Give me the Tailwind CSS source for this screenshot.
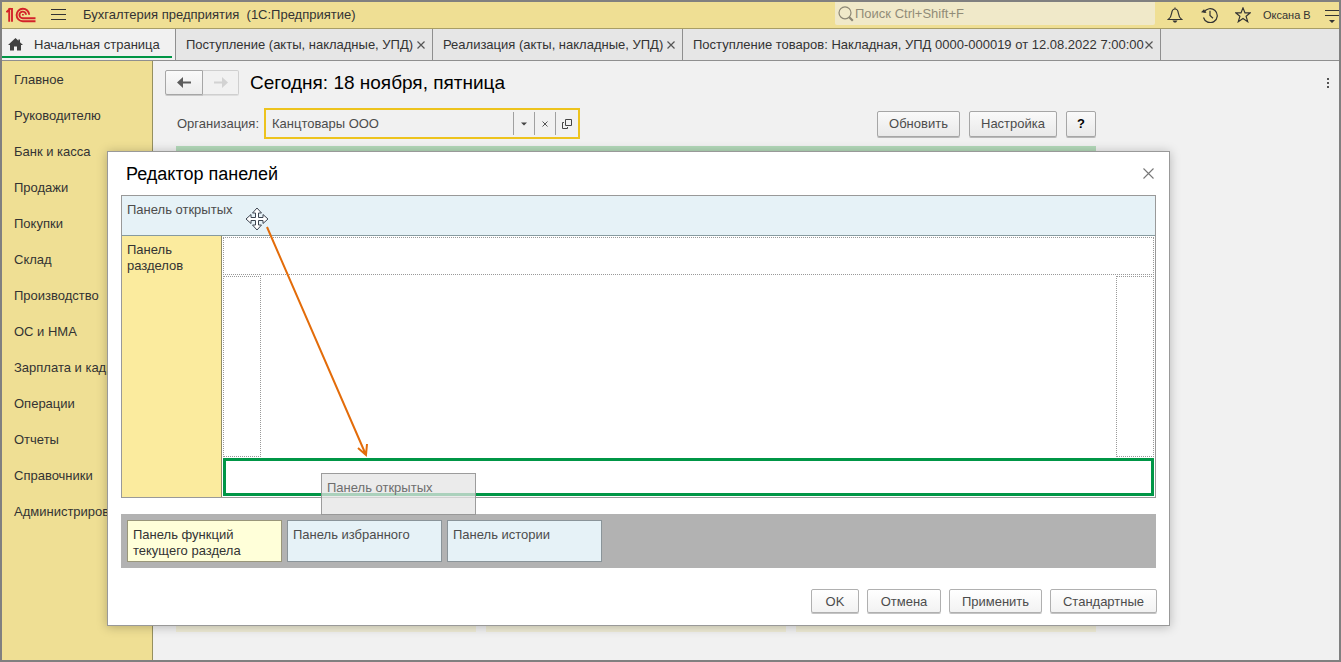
<!DOCTYPE html>
<html lang="ru">
<head>
<meta charset="utf-8">
<title>Бухгалтерия предприятия (1С:Предприятие)</title>
<script src="https://cdn.jsdelivr.net/npm/@tailwindcss/browser@4"></script>
</head>
<body class="font-['Liberation_Sans',Arial,sans-serif] text-[13px] leading-4 text-[#333]">
<div class="relative flex min-h-screen flex-col overflow-hidden border-2 border-[#808080] bg-[#f1f1f1]">

  <header class="flex h-[27px] items-center border-b border-[#a89e66] bg-[#efdf94] pb-px">
    <svg class="ml-1 h-[16px] w-[30px] shrink-0" viewBox="0 0 30 16" fill="none" stroke="#d3222a" stroke-width="1.9" aria-label="1С" role="img">
      <path d="M.4 5.200 3.200 2.600V14.800"/><path d="M2.400 1.900H6V14.800"/>
      <path d="M23.200 7.800A6.300 6.300 0 1 0 16.800 14.300H29.500"/>
      <path d="M20 7.800A3.300 3.300 0 1 0 16.800 11.200H29.500"/>
      <path d="M16 7.800h1.800" stroke-width="1.500"/>
    </svg>
    <button class="ml-[15px] flex h-6 w-4 flex-col justify-center gap-1" aria-label="Меню">
      <span class="h-px w-[15px] bg-[#333]"></span><span class="h-px w-[15px] bg-[#333]"></span><span class="h-px w-[15px] bg-[#333]"></span>
    </button>
    <h1 class="ml-4 whitespace-pre">Бухгалтерия предприятия  (1С:Предприятие)</h1>
    <div class="ml-auto flex h-full items-center">
      <label class="mb-[2px] flex h-[23px] w-[320px] items-center rounded-b-xs bg-[#f0e9c9] pl-[3px]">
        <svg class="h-4 w-4 shrink-0" viewBox="0 0 16 16" fill="none" stroke="#8c8775" stroke-width="1.2"><circle cx="7" cy="6.8" r="6"/><path d="m11 11 3.8 3.8" stroke-width="2.2"/></svg>
        <input type="search" aria-label="Поиск" placeholder="Поиск Ctrl+Shift+F" class="ml-px min-w-0 flex-1 bg-transparent outline-none placeholder:text-[#918c78]">
      </label>
      <button class="ml-3" aria-label="Уведомления"><svg class="h-4 w-4" viewBox="0 0 16 16" fill="none" stroke="#333" stroke-width="1.2"><path d="M8 .5V2M1.300 12.500C3.600 10.800 4.300 9 4.700 6 5 3.400 6.200 2 8 2s3 1.400 3.300 4c.4 3 1.100 4.800 3.400 6.500Z"/><path d="M5.500 13.500h5l-1.500 2H7Z" fill="#333" stroke="none"/></svg></button>
      <button class="ml-[18px]" aria-label="История"><svg class="h-4 w-[17px]" viewBox="0 0 17 16" fill="none" stroke="#333" stroke-width="1.2"><path d="M3 5.500A7 7 0 1 1 2.500 10.500"/><path d="M9 3.800V8.500l3 2.800"/><path d="M0 5.200 5.500 6 3 2.200Z" fill="#333" stroke="none"/></svg></button>
      <button class="ml-[17px]" aria-label="Избранное"><svg class="h-4 w-4" viewBox="0 0 16 16" fill="none" stroke="#333" stroke-width="1.2"><path d="m8 .9 2 5h5.2l-4.1 3.4 1.6 5.4L8 11.5l-4.7 3.2 1.6-5.4L.8 5.9H6Z"/></svg></button>
      <span class="ml-3 w-12 whitespace-nowrap text-[11px]">Оксана В</span>
      <button class="ml-[14px]" aria-label="Сервис и настройки"><svg class="h-4 w-[14px]" viewBox="0 0 14 16"><path d="M0 3h14v1H0zM0 8h14v1H0zM4 13h6l-3 3z" fill="#333"/></svg></button>
    </div>
  </header>

  <nav class="flex h-8 border-b border-[#8f8f8f] bg-[#e6e6e6]" aria-label="Открытые окна">
    <div class="flex w-[174px] border-r border-[#8f8f8f] bg-[#f1f1f1] pr-[3px]">
      <a href="#" class="mb-[2px] flex flex-1 items-center border-b-2 border-[#009646] pt-1 pl-[6px] whitespace-nowrap">
        <svg class="mr-[11px] h-[13px] w-[15px]" viewBox="0 0 15 13"><path d="M7.5 0 0 7h2v5.5h4V8.500h3v4h4V7h2L12 4.200V1.500h-1.600v1.200Z" fill="#404040"/></svg>Начальная страница</a>
    </div>
    <div class="flex w-[257px] items-center justify-between border-r border-[#8f8f8f] pt-px pr-[7px] pl-[10px] whitespace-nowrap"><a href="#">Поступление (акты, накладные, УПД)</a><button aria-label="Закрыть"><svg class="h-2 w-2" viewBox="0 0 8 8" stroke="#555" stroke-width="1.200"><path d="m.5.5 7 7m0-7-7 7"/></svg></button></div>
    <div class="flex w-[250px] items-center justify-between border-r border-[#8f8f8f] pt-px pr-[7px] pl-[10px] whitespace-nowrap"><a href="#">Реализация (акты, накладные, УПД)</a><button aria-label="Закрыть"><svg class="h-2 w-2" viewBox="0 0 8 8" stroke="#555" stroke-width="1.200"><path d="m.5.5 7 7m0-7-7 7"/></svg></button></div>
    <div class="flex w-[478px] items-center justify-between border-r border-[#8f8f8f] pt-px pr-[7px] pl-[10px] whitespace-nowrap"><a href="#">Поступление товаров: Накладная, УПД 0000-000019 от 12.08.2022 7:00:00</a><button aria-label="Закрыть"><svg class="h-2 w-2" viewBox="0 0 8 8" stroke="#555" stroke-width="1.200"><path d="m.5.5 7 7m0-7-7 7"/></svg></button></div>
  </nav>

  <div class="flex flex-1">
    <nav class="flex w-[151px] shrink-0 flex-col border-r border-[#96905f] bg-[#efdf94] pt-px whitespace-nowrap" aria-label="Разделы">
      <a href="#" class="flex h-9 items-center pl-3">Главное</a>
      <a href="#" class="flex h-9 items-center pl-3">Руководителю</a>
      <a href="#" class="flex h-9 items-center pl-3">Банк и касса</a>
      <a href="#" class="flex h-9 items-center pl-3">Продажи</a>
      <a href="#" class="flex h-9 items-center pl-3">Покупки</a>
      <a href="#" class="flex h-9 items-center pl-3">Склад</a>
      <a href="#" class="flex h-9 items-center pl-3">Производство</a>
      <a href="#" class="flex h-9 items-center pl-3">ОС и НМА</a>
      <a href="#" class="flex h-9 items-center pl-3">Зарплата и кадры</a>
      <a href="#" class="flex h-9 items-center pl-3">Операции</a>
      <a href="#" class="flex h-9 items-center pl-3">Отчеты</a>
      <a href="#" class="flex h-9 items-center pl-3">Справочники</a>
      <a href="#" class="flex h-9 items-center pl-3">Администрирование</a>
    </nav>

    <main class="flex flex-1 flex-col pt-[9px] pr-[6px] pl-3">
      <div class="flex items-center">
        <button class="flex h-[25px] w-[38px] items-center justify-center rounded-l-xs border border-[#a6a6a6] bg-linear-to-b from-[#fafafa] to-[#ececec] shadow-[0_1px_0_#c8c8c8]" aria-label="Назад"><svg class="h-[11px] w-[14px]" viewBox="0 0 14 11"><path d="M0 5.500 6 0v4.400h8v2.200H6V11Z" fill="#5c5c5c"/></svg></button>
        <button disabled class="flex h-[25px] w-9 items-center justify-center rounded-r-xs border border-l-0 border-[#cfcfcf] shadow-[0_1px_0_#dedede]" aria-label="Вперед"><svg class="h-[11px] w-[14px]" viewBox="0 0 14 11"><path d="M14 5.500 8 0v4.400H0v2.200h8V11Z" fill="#d2d2d2"/></svg></button>
        <h2 class="ml-[11px] text-[19px] leading-6 text-black">Сегодня: 18 ноября, пятница</h2>
        <button class="ml-auto" aria-label="Ещё"><svg class="h-3 w-[9px]" viewBox="0 0 9 12"><path d="M3 1h2v2H3zM3 5h2v2H3zM3 9h2v2H3z" fill="#555"/></svg></button>
      </div>
      <div class="mt-[13px] flex items-center text-[#4c4c4c]">
        <label for="org" class="w-[87px] pl-3">Организация:</label>
        <div class="ml-3 flex h-[31px] w-[316px] items-center border-2 border-[#edc31d]">
          <input id="org" value="Канцтовары ООО" class="h-full min-w-0 flex-1 bg-transparent pl-[6px] outline-none">
          <button class="flex h-[23px] w-[21px] items-center justify-center border-l border-[#a0a0a0]" aria-label="Выбрать"><svg class="h-1 w-[6px]" viewBox="0 0 6 4"><path d="M0 .5h6l-3 3z" fill="#444"/></svg></button>
          <button class="flex h-[23px] w-[21px] items-center justify-center border-l border-[#a0a0a0]" aria-label="Очистить"><svg class="h-[6px] w-[6px]" viewBox="0 0 6 6" stroke="#555"><path d="m.5.5 5 5m0-5-5 5"/></svg></button>
          <button class="flex h-[23px] w-[23px] items-center justify-center border-l border-[#a0a0a0]" aria-label="Открыть"><svg class="h-[10px] w-[10px]" viewBox="0 0 10 10" fill="none" stroke="#444"><path d="M3.500.5h6v6h-6zM2 3.500H.5v6h5V8"/></svg></button>
        </div>
        <button class="ml-auto h-[26px] w-[83px] rounded-xs border border-[#a6a6a6] bg-linear-to-b from-[#fafafa] to-[#e9e9e9] pt-px shadow-[0_1px_0_#b8b8b8]">Обновить</button>
        <button class="ml-[9px] h-[26px] w-[88px] rounded-xs border border-[#a6a6a6] bg-linear-to-b from-[#fafafa] to-[#e9e9e9] pt-px shadow-[0_1px_0_#b8b8b8]">Настройка</button>
        <button class="mr-[237px] ml-[9px] h-[26px] w-[30px] rounded-xs border border-[#a6a6a6] bg-linear-to-b from-[#fafafa] to-[#e9e9e9] pt-px font-bold text-black shadow-[0_1px_0_#b8b8b8]">?</button>
      </div>
      <div class="mt-[7px] mr-[237px] ml-[11px] flex flex-1 flex-col">
        <div class="h-4 bg-[#b3d9b9]"></div>
        <div class="mb-7 grid flex-1 grid-cols-3 gap-[10px]">
          <div class="bg-[#efecd6]"></div><div class="bg-[#efecd6]"></div><div class="bg-[#efecd6]"></div>
        </div>
      </div>
    </main>
  </div>

  <section role="dialog" aria-labelledby="dlg" class="absolute top-[149px] right-[169px] left-[105px] border border-[#999] bg-white px-[13px] pb-3 shadow-[0_1px_10px_rgba(0,0,0,0.25)]">
    <div class="flex h-[43px] items-center justify-between pl-[5px]">
      <h2 id="dlg" class="text-[18px] leading-6 text-black">Редактор панелей</h2>
      <button class="mr-[2px]" aria-label="Закрыть"><svg class="h-[11px] w-[11px]" viewBox="0 0 11 11" stroke="#777" stroke-width="1.100"><path d="m.5.5 10 10m0-10-10 10"/></svg></button>
    </div>
    <div class="relative border border-[#999]">
      <div class="h-10 border-b border-[#879ba0] bg-[#e6f2f7] pt-[6px] pl-[5px] text-[#4c4c4c]">Панель открытых</div>
      <div class="flex h-[261px]">
        <div class="w-[100px] border-r border-[#8f8b66] bg-[#fbeb9e] pt-[6px] pl-[5px]">Панель<br>разделов</div>
        <div class="flex flex-1 flex-col gap-px p-px">
          <div class="h-[38px] border border-dotted border-[#999]"></div>
          <div class="flex flex-1 justify-between">
            <div class="w-[38px] border border-dotted border-[#999]"></div>
            <div class="w-[38px] border border-dotted border-[#999]"></div>
          </div>
          <div class="h-[38px] border-3 border-[#009646]"></div>
        </div>
      </div>
      <svg class="absolute top-[11px] left-[123px] h-6 w-6" viewBox="0 0 24 24" fill="#fff" stroke="#3c4450" stroke-width="1"><path d="m12 1 4.500 5H13.500v4.500H18V7.500l5 4.500-5 4.500V13.500h-4.500V18h3L12 23l-4.500-5h3V13.500H6v3L1 12l5-4.500v3h4.500V6h-3Z"/></svg>
      <svg class="absolute top-[30px] left-[143px] h-[232px] w-[106px]" viewBox="0 0 106 232" fill="none" stroke="#e36c0a" stroke-width="2"><path d="M2 1 101 229M93 222l8 7 1-11"/></svg>
      <div class="absolute top-[277px] left-[199px] z-10 h-[42px] w-[155px] border border-[#888]/80 bg-[#e4e4e4]/75 pt-[6px] pl-[5px] text-[#6e6e6e]">Панель открытых</div>
    </div>
    <div class="mt-4 flex gap-[5px] bg-[#b2b2b2] p-[6px]">
      <div class="h-[42px] w-[155px] border border-[#99967a] bg-[#ffffd9] pt-[6px] pl-[5px]">Панель функций<br>текущего раздела</div>
      <div class="h-[42px] w-[155px] border border-[#8a9499] bg-[#e6f2f7] pt-[6px] pl-[5px] text-[#4c4c4c]">Панель избранного</div>
      <div class="h-[42px] w-[155px] border border-[#8a9499] bg-[#e6f2f7] pt-[6px] pl-[5px] text-[#4c4c4c]">Панель истории</div>
    </div>
    <div class="mt-[21px] -mr-px flex justify-end gap-2 text-[#4c4c4c]">
      <button class="h-6 w-12 rounded-xs border border-[#b0b0b0] bg-linear-to-b from-white to-[#f2f2f2] pt-px shadow-[0_1px_0_#c4c4c4]">OK</button>
      <button class="h-6 w-[74px] rounded-xs border border-[#b0b0b0] bg-linear-to-b from-white to-[#f2f2f2] pt-px shadow-[0_1px_0_#c4c4c4]">Отмена</button>
      <button class="h-6 w-[93px] rounded-xs border border-[#b0b0b0] bg-linear-to-b from-white to-[#f2f2f2] pt-px shadow-[0_1px_0_#c4c4c4]">Применить</button>
      <button class="h-6 w-[107px] rounded-xs border border-[#b0b0b0] bg-linear-to-b from-white to-[#f2f2f2] pt-px shadow-[0_1px_0_#c4c4c4]">Стандартные</button>
    </div>
  </section>
</div>
</body>
</html>
